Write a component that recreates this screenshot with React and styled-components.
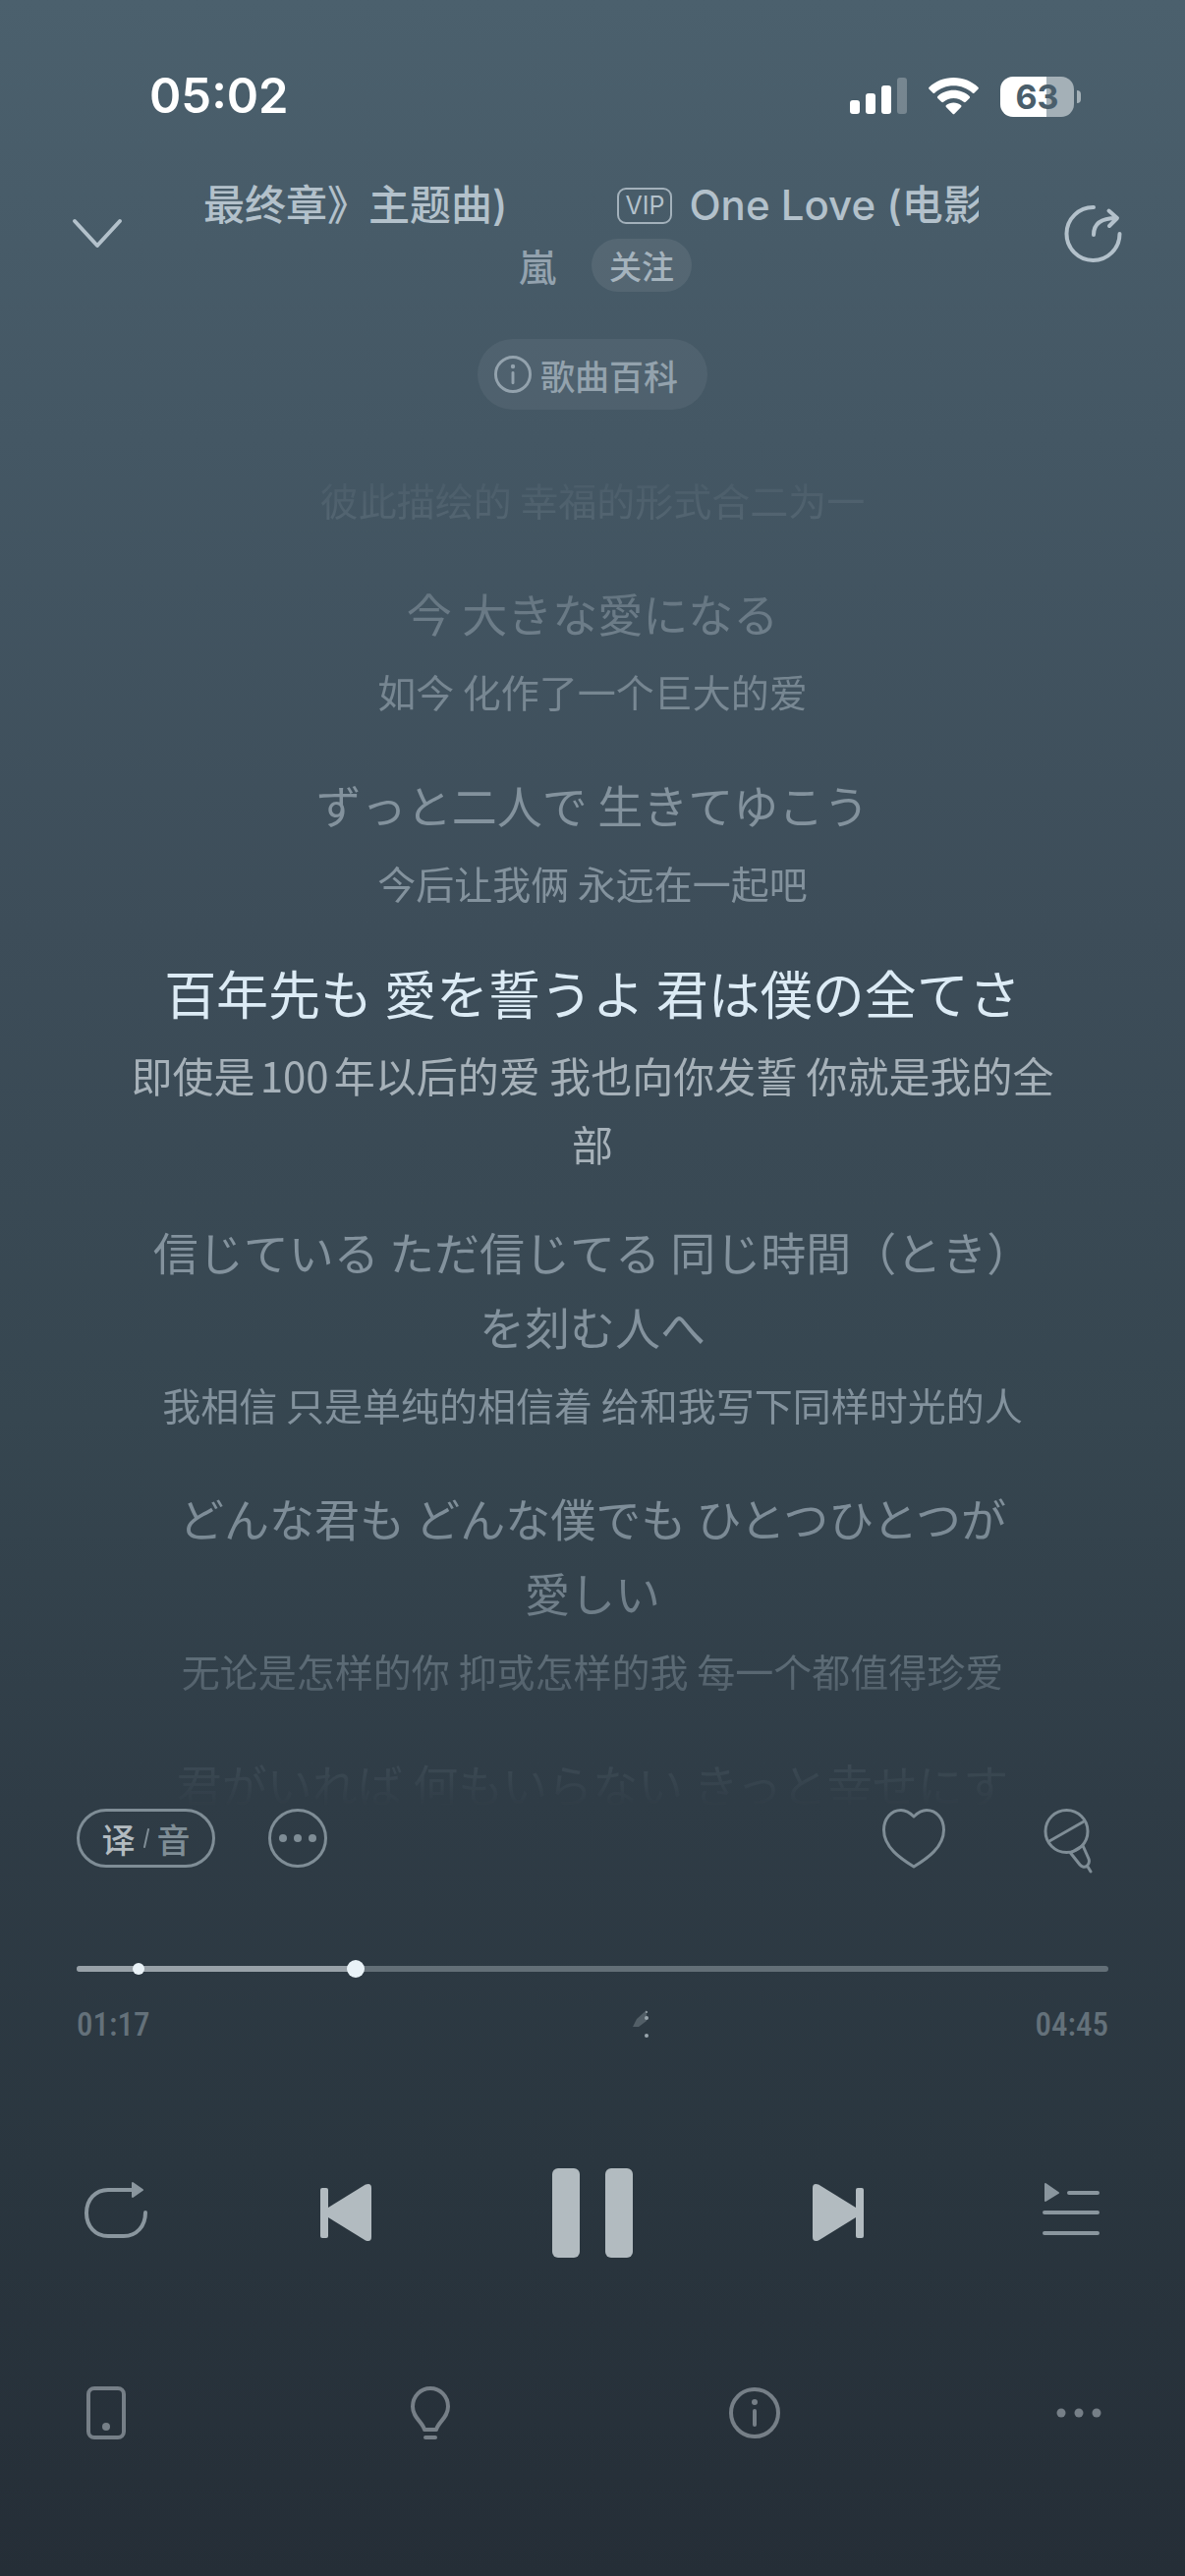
import React, { useState } from 'react';
import styled, { createGlobalStyle } from 'styled-components'

const GlobalStyle = createGlobalStyle`
  * {
    box-sizing:border-box;
  }
  body {
    margin:0;
    background:#262f38;
    font-family:Inter, "Noto Sans CJK SC", sans-serif;
  }
  button {
    display:flex;
    align-items:center;
    justify-content:center;
    padding:0;
    border:none;
    background:none;
    color:inherit;
    font:inherit;
    cursor:pointer;
  }
  svg {
    display:block;
    flex:none;
  }
`

const Page = styled.div`
  display:flex;
  flex-direction:column;
  min-height:100vh;
  background:linear-gradient(180deg, #4b606d 0%, #445764 17%, #3d4d59 36%, #364650 55%, #2f3c46 70%, #2a363f 84%, #252e37 100%);
`
const StatusBar = styled.div`
  display:flex;
  align-items:center;
  justify-content:space-between;
  padding:62px 106px 45px 152px;
  color:#fff;
`
const Clock = styled.time`
  font-size:49px;
  line-height:72px;
  font-weight:600;
`
const StatusIcons = styled.div`
  display:flex;
  align-items:center;
  gap:22px;
`
const Battery = styled.div`
  display:flex;
  align-items:center;
  gap:3px;
`
const BatteryLevel = styled.div`
  width:75px;
  border-radius:13px;
  background:linear-gradient(90deg, #fff 63%, #a4b0b7 63%);
  color:#4a5e6b;
  font-size:34px;
  line-height:41px;
  font-weight:700;
  text-align:center;
`
const BatteryCap = styled.div`
  width:4px;
  height:13px;
  border-radius:0 6px 6px 0;
  background:#a4b0b7;
`

const Header = styled.header`
  display:grid;
  grid-template-columns:90px minmax(0, 1fr) 80px;
  align-items:center;
  gap:63px;
  padding:0 54px;
  color:#b3c1cb;
`
const HeaderButton = styled.button`
  height:80px;
`
const Marquee = styled.h1`
  display:flex;
  align-items:center;
  margin:0 13px 0 0;
  overflow:hidden;
  white-space:nowrap;
  font-size:42px;
  line-height:60px;
  font-weight:500;
`
const VipBadge = styled.span`
  margin:0 17px 0 112px;
  padding:0 6px;
  border:2px solid #a3b1bb;
  border-radius:9px;
  font-size:25px;
  line-height:33px;
  font-weight:400;
`
const ArtistRow = styled.div`
  display:flex;
  align-items:center;
  justify-content:center;
  gap:36px;
  margin-top:4px;
  padding-left:16px;
`
const Artist = styled.a`
  color:#93a2ae;
  font-family:"Noto Sans CJK JP", sans-serif;
  font-size:38px;
  line-height:50px;
  font-weight:500;
  text-decoration:none;
`
const FollowButton = styled.button`
  width:102px;
  height:54px;
  border-radius:27px;
  background:rgba(255,255,255,.08);
  color:#a5b3bd;
  font-size:33px;
  font-weight:500;
`
const WikiButton = styled.button`
  align-self:center;
  gap:9px;
  height:72px;
  margin-top:48px;
  padding:0 30px 0 17px;
  border-radius:36px;
  background:rgba(255,255,255,.06);
  color:#93a2ad;
  font-size:35px;
  font-weight:500;
`

const Lyrics = styled.main`
  flex:1 0 auto;
  padding-top:59px;
  text-align:center;
  text-autospace:normal;
  mask-image:linear-gradient(180deg, transparent 3%, rgba(0,0,0,.7) 16%, #000 26%, #000 76%, rgba(0,0,0,.75) 85%, rgba(0,0,0,.4) 91%, transparent 99%);
`
const Verse = styled.section`
  margin-bottom:${props => props.$active ? 36 : 45}px;
  &:last-child {
    margin-bottom:0;
  }
`
const Original = styled.p`
  margin:0;
  color:${props => props.$active ? '#dcebf5' : '#83929d'};
  font-family:"Noto Sans CJK JP", sans-serif;
  font-size:${props => props.$active ? 53 : 46}px;
  line-height:${props => props.$active ? 70 : 76}px;
`
const Translation = styled.p`
  margin:0;
  color:${props => props.$active ? '#a6b1b9' : '#83929d'};
  font-family:"Noto Sans CJK SC", sans-serif;
  font-size:${props => props.$active ? 42 : 39}px;
  line-height:${props => props.$active ? 70 : 64}px;
  ${Original} + & {
    margin-top:${props => props.$active ? 14 : 10}px;
  }
`
const Line = styled.span`
  display:block;
  white-space:nowrap;
`

const Tools = styled.div`
  display:flex;
  align-items:center;
  justify-content:space-between;
  height:66px;
  margin-top:-16px;
  padding:0 78px;
  color:#7f8d96;
`
const ToolGroup = styled.div`
  display:flex;
  align-items:center;
  gap:${props => props.$gap}px;
`
const ModeButton = styled.button`
  gap:8px;
  width:141px;
  height:60px;
  border:3px solid #7f8d96;
  border-radius:30px;
  font-size:34px;
  font-weight:500;
`
const ModeOn = styled.span`
  color:#b3bbc0;
`
const ToolButton = styled.button`
  width:${props => props.$width}px;
  height:66px;
`

const Seek = styled.div`
  position:relative;
  height:18px;
  margin:91px 78px 0;
`
const SeekTrack = styled.div`
  height:6px;
  margin-top:6px;
  border-radius:3px;
  background:#636f77;
`
const SeekFill = styled.div`
  height:6px;
  border-radius:3px;
  background:#98a1a8;
`
const SeekMark = styled.span`
  position:absolute;
  top:3px;
  left:6%;
  width:12px;
  height:12px;
  border-radius:50%;
  background:#e9f2f7;
  transform:translateX(-50%);
`
const SeekInput = styled.input`
  position:absolute;
  top:0;
  left:-9px;
  width:calc(100% + 18px);
  height:18px;
  margin:0;
  appearance:none;
  background:none;
  cursor:pointer;
  &::-webkit-slider-thumb {
    appearance:none;
    width:18px;
    height:18px;
    border-radius:50%;
    background:#e9f2f7;
  }
`
const Times = styled.div`
  display:flex;
  align-items:center;
  justify-content:space-between;
  padding:28px 78px 0;
  color:#64717a;
  font-family:"Roboto Condensed", Roboto, sans-serif;
  font-size:33px;
  line-height:40px;
  font-weight:500;
`

const Playback = styled.div`
  display:flex;
  align-items:center;
  justify-content:space-between;
  margin-top:123px;
  padding:0 78px;
  color:#b2bbc0;
`
const PlayButton = styled.button`
  width:${props => props.$width}px;
  height:96px;
  color:${props => props.$dim ? '#8a969e' : 'inherit'};
`
const Footer = styled.nav`
  display:flex;
  justify-content:space-between;
  padding:126px 78px 136px;
  color:#767f87;
`
const FooterButton = styled.button`
  width:60px;
  height:60px;
`

const verses = [
  { original: [], translation: ["彼此描绘的 幸福的形式合二为一"] },
  { original: ["今 大きな愛になる"], translation: ["如今 化作了一个巨大的爱"] },
  { original: ["ずっと二人で 生きてゆこう"], translation: ["今后让我俩 永远在一起吧"] },
  { original: ["百年先も 愛を誓うよ 君は僕の全てさ"], translation: ["即使是100年以后的爱 我也向你发誓 你就是我的全", "部"], active: true },
  { original: ["信じている ただ信じてる 同じ時間（とき）", "を刻む人へ"], translation: ["我相信 只是单纯的相信着 给和我写下同样时光的人"] },
  { original: ["どんな君も どんな僕でも ひとつひとつが", "愛しい"], translation: ["无论是怎样的你 抑或怎样的我 每一个都值得珍爱"] },
  { original: ["君がいれば 何もいらない きっと幸せにす"], translation: [] }
]

const Icon = ({ w, h, stroke = 4, children }) => (
  <svg width={w} height={h} viewBox={`0 0 ${w} ${h}`} fill="none" stroke="currentColor" strokeWidth={stroke} strokeLinecap="round" strokeLinejoin="round" aria-hidden="true">
    {children}
  </svg>
)

const SignalIcon = () => (
  <svg width="58" height="38" viewBox="0 0 58 38" fill="#fff" aria-hidden="true">
    <rect x="0" y="23" width="10" height="14" rx="3" />
    <rect x="16" y="16" width="10" height="21" rx="3" />
    <rect x="32" y="8" width="10" height="29" rx="3" />
    <rect x="48" y="0" width="10" height="37" rx="3" opacity=".25" />
  </svg>
)

const WifiIcon = () => (
  <svg width="51" height="38" viewBox="0 0 51 38" fill="#fff" aria-hidden="true">
    <path d="M25.5 0C35.3 0 44 3.700 50.400 9.700Q51.400 10.700 50.400 11.700L46.600 15.500Q45.600 16.500 44.600 15.500C39.500 11 32.800 8.300 25.500 8.300S11.500 11 6.400 15.500Q5.400 16.500 4.400 15.500L.6 11.700Q-.4 10.700 .6 9.700C7 3.700 15.700 0 25.500 0Z" />
    <path d="M25.500 12.800C31.700 12.800 37.400 15.100 41.700 19Q42.700 20 41.700 21L37.800 24.800Q36.800 25.700 35.800 24.800C33 22.400 29.400 21 25.500 21S18 22.400 15.200 24.800Q14.200 25.700 13.200 24.800L9.300 21Q8.300 20 9.300 19C13.600 15.100 19.300 12.800 25.500 12.800Z" />
    <path d="M25.500 25.400C28.400 25.400 31 26.400 33 28Q34.100 29 33.100 30L26.500 36.700Q25.500 37.700 24.500 36.700L17.900 30Q16.900 29 18 28C20 26.400 22.600 25.400 25.500 25.400Z" />
  </svg>
)

const InfoIcon = ({ size, stroke }) => (
  <svg width={size} height={size} viewBox="0 0 52 52" fill="none" stroke="currentColor" strokeWidth={stroke} strokeLinecap="round" aria-hidden="true">
    <circle cx="26" cy="26" r="24" />
    <path d="M26 24V38" />
    <circle cx="26" cy="15" r="3" fill="currentColor" stroke="none" />
  </svg>
)

class LyricList extends React.PureComponent {
  render() {
    return (
      <Lyrics>
        {this.props.verses.map((verse, i) => (
          <Verse key={i} $active={verse.active}>
            {verse.original.length > 0 && <Original lang="ja" $active={verse.active}>
              {verse.original.map(line => <Line key={line}>{line}</Line>)}
            </Original>}
            {verse.translation.length > 0 && <Translation lang="zh-CN" $active={verse.active}>
              {verse.translation.map(line => <Line key={line}>{line}</Line>)}
            </Translation>}
          </Verse>
        ))}
      </Lyrics>
    )
  }
}

const formatTime = (s) => `${String(Math.floor(s / 60)).padStart(2, '0')}:${String(s % 60).padStart(2, '0')}`

const App = () => {
  const duration = 285;
  const [position, setPosition] = useState(77);

  return (
    <Page>
      <GlobalStyle />
      <StatusBar>
        <Clock>05:02</Clock>
        <StatusIcons>
          <SignalIcon />
          <WifiIcon />
          <Battery><BatteryLevel>63</BatteryLevel><BatteryCap /></Battery>
        </StatusIcons>
      </StatusBar>

      <Header>
        <HeaderButton type="button" aria-label="收起">
          <Icon w={54} h={34}><path d="M4 4L27 29L50 4" /></Icon>
        </HeaderButton>
        <div>
          <Marquee>
            <span>最终章》主题曲)</span>
            <VipBadge>VIP</VipBadge>
            <span>One Love (电影</span>
          </Marquee>
          <ArtistRow>
            <Artist href="#artist" lang="ja">嵐</Artist>
            <FollowButton type="button">关注</FollowButton>
          </ArtistRow>
        </div>
        <HeaderButton type="button" aria-label="分享">
          <Icon w={66} h={66}>
            <path d="M34 6A27 27 0 1 0 60.500 33" />
            <path d="M34 34C34 23 41 17 57 17M49.500 9.500L58 17L50 25" />
          </Icon>
        </HeaderButton>
      </Header>

      <WikiButton type="button"><InfoIcon size={38} stroke={4} />歌曲百科</WikiButton>

      <LyricList verses={verses} />

      <Tools>
        <ToolGroup $gap={54}>
          <ModeButton type="button">
            <ModeOn>译</ModeOn>
            <Icon w={6} h={20} stroke={2}><path d="M5 1L1 19" /></Icon>
            <span>音</span>
          </ModeButton>
          <ToolButton type="button" $width={60} aria-label="更多歌词选项">
            <Icon w={60} h={60} stroke={3}>
              <circle cx="30" cy="30" r="28.500" />
              <g fill="currentColor" stroke="none">
                <circle cx="15" cy="30" r="4" />
                <circle cx="30" cy="30" r="4" />
                <circle cx="45" cy="30" r="4" />
              </g>
            </Icon>
          </ToolButton>
        </ToolGroup>
        <ToolGroup $gap={75}>
          <ToolButton type="button" $width={82} aria-label="喜欢">
            <Icon w={68} h={66} stroke={3}>
              <path d="M34 11C30 7 26 4.500 21 4.500C11 4.500 3.500 13 3.500 24.500C3.500 42 20 53.500 34 62C48 53.500 64.500 42 64.500 24.500C64.500 13 57 4.500 47 4.500C42 4.500 38 7 34 11Z" />
            </Icon>
          </ToolButton>
          <ToolButton type="button" $width={82} aria-label="K歌">
            <Icon w={62} h={72} stroke={3}>
              <circle cx="29.500" cy="29" r="21.500" />
              <path d="M12 39L47 19M33.500 51L43 63C45 65.500 48 66 50.500 64C52.500 62 53 60 52 57L46 43.500L33.500 51M51 65L54 70" />
            </Icon>
          </ToolButton>
        </ToolGroup>
      </Tools>

      <Seek>
        <SeekTrack><SeekFill style={{ width: `${position / duration * 100}%` }} /></SeekTrack>
        <SeekMark />
        <SeekInput type="range" min="0" max={duration} value={position} onChange={e => setPosition(Number(e.target.value))} aria-label="播放进度" />
      </Seek>
      <Times>
        <span>{formatTime(position)}</span>
        <svg width="120" height="34" viewBox="0 0 120 34" fill="#9aa6ad" aria-hidden="true">
          <path d="M101 19L105 11L115 2V13L107 19Z" opacity=".35" />
          <circle cx="115" cy="4" r="1" />
          <circle cx="115" cy="10" r="2" />
          <circle cx="115" cy="28" r="2" />
        </svg>
        <span>{formatTime(duration)}</span>
      </Times>

      <Playback>
        <PlayButton type="button" $width={80} $dim aria-label="列表循环">
          <Icon w={72} h={72}>
            <path d="M66 36C66 50 57 60 44 60H28C15 60 6 50 6 36.500S15 13 28 13H52" />
            <path d="M53 6L63 13L53 20Z" fill="currentColor" strokeWidth="2" />
          </Icon>
        </PlayButton>
        <PlayButton type="button" $width={84} aria-label="上一首">
          <svg width="54" height="60" viewBox="0 0 54 60" fill="currentColor" aria-hidden="true">
            <rect x="1" y="5" width="8" height="51" rx="2" />
            <path d="M9 25L47 1.500Q53 -.5 53 5V55Q53 60.500 47 58.500L9 35Z" />
          </svg>
        </PlayButton>
        <PlayButton type="button" $width={114} aria-label="暂停">
          <svg width="82" height="92" viewBox="0 0 82 92" fill="currentColor" aria-hidden="true">
            <rect x="0" y="1" width="28" height="91" rx="6" />
            <rect x="54" y="1" width="28" height="91" rx="6" />
          </svg>
        </PlayButton>
        <PlayButton type="button" $width={84} aria-label="下一首">
          <svg width="54" height="60" viewBox="0 0 54 60" fill="currentColor" aria-hidden="true">
            <rect x="44" y="5" width="8" height="51" rx="2" />
            <path d="M44 25L6 1.500Q0 -.5 0 5V55Q0 60.500 6 58.500L44 35Z" />
          </svg>
        </PlayButton>
        <PlayButton type="button" $width={80} $dim aria-label="播放列表">
          <Icon w={62} h={60}>
            <path d="M7 1V18L20 10Z" fill="currentColor" strokeWidth="2" />
            <path d="M31 10H60M6 30H60M6 51H60" />
          </Icon>
        </PlayButton>
      </Playback>

      <Footer>
        <FooterButton type="button" aria-label="设备">
          <Icon w={40} h={54}>
            <rect x="2" y="2" width="36" height="50" rx="6" />
            <circle cx="20" cy="41" r="4" fill="currentColor" stroke="none" />
          </Icon>
        </FooterButton>
        <FooterButton type="button" aria-label="灵感">
          <Icon w={40} h={54}>
            <path d="M14 44H26C28 36 38 32 38 20.500C38 10 30 2 20 2S2 10 2 20.500C2 32 12 36 14 44Z" />
            <path d="M15 52H25" />
          </Icon>
        </FooterButton>
        <FooterButton type="button" aria-label="歌曲信息">
          <InfoIcon size={52} stroke={4} />
        </FooterButton>
        <FooterButton type="button" aria-label="更多">
          <svg width="46" height="10" viewBox="0 0 46 10" fill="currentColor" aria-hidden="true">
            <circle cx="5" cy="5" r="4.500" />
            <circle cx="23" cy="5" r="4.500" />
            <circle cx="41" cy="5" r="4.500" />
          </svg>
        </FooterButton>
      </Footer>
    </Page>
  )
}

export default App
